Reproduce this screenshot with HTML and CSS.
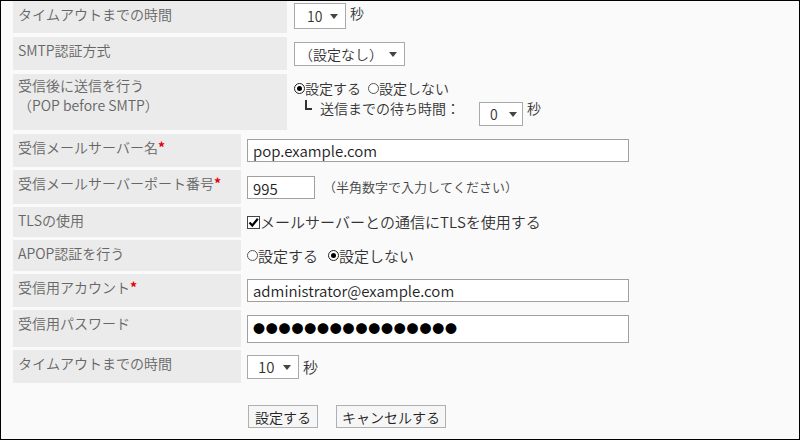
FILE: index.html
```html
<!DOCTYPE html>
<html lang="ja">
<head>
    <meta charset="utf-8">
    <link rel="stylesheet" href="styles.css">
</head>
<body>
    <div class="screen">
        <div class="form-table top-table">
            <div class="label">タイムアウトまでの時間</div>
            <div class="value value-top">
                <span class="select sel-sec"><select><option>10</option></select></span>
                <span class="unit">秒</span>
            </div>

            <div class="label">SMTP認証方式</div>
            <div class="value">
                <span class="select sel-auth"><select><option>（設定なし）</option></select></span>
            </div>

            <div class="label label-multi">受信後に送信を行う<br>（POP before SMTP）</div>
            <div class="value value-stack">
                <div class="choice-line">
                    <label class="choice"><span class="radio checked"></span>設定する</label>
                    <label class="choice"><span class="radio"></span>設定しない</label>
                </div>
                <div class="sub-line">
                    <span class="branch"></span>
                    <span class="sub-text">送信までの待ち時間：</span>
                    <span class="select sel-wait"><select><option>0</option></select></span>
                    <span class="unit sub-text">秒</span>
                </div>
            </div>
        </div>

        <div class="form-table bottom-table">
            <div class="label">受信メールサーバー名<span class="req">*</span></div>
            <div class="value">
                <input class="text wide" type="text" value="pop.example.com">
            </div>

            <div class="label">受信メールサーバーポート番号<span class="req">*</span></div>
            <div class="value">
                <input class="text port" type="text" value="995">
                <span class="hint">（半角数字で入力してください）</span>
            </div>

            <div class="label">TLSの使用</div>
            <div class="value">
                <label class="choice">
                    <span class="checkbox">
                        <svg width="11" height="11" viewBox="0 0 11 11"><path d="M1.5 5.5 L4.3 8.5 L9.8 1.8" fill="none" stroke="#000" stroke-width="2.2"/></svg>
                    </span>メールサーバーとの通信にTLSを使用する
                </label>
            </div>

            <div class="label">APOP認証を行う</div>
            <div class="value">
                <label class="choice"><span class="radio"></span>設定する</label>
                <label class="choice"><span class="radio checked"></span>設定しない</label>
            </div>

            <div class="label">受信用アカウント<span class="req">*</span></div>
            <div class="value">
                <input class="text wide" type="text" value="administrator@example.com">
            </div>

            <div class="label">受信用パスワード</div>
            <div class="value">
                <span class="text wide pass"><span class="dots">●●●●●●●●●●●●●●●●</span></span>
            </div>

            <div class="label">タイムアウトまでの時間</div>
            <div class="value">
                <span class="select sel-sec2"><select><option>10</option></select></span>
                <span class="unit">秒</span>
            </div>
        </div>

        <div class="actions">
            <button class="btn">設定する</button>
            <button class="btn">キャンセルする</button>
        </div>
    </div>
</body>
</html>
```

FILE: styles.css
```css
body {
    margin: 0;
    font-family: "Noto Sans CJK JP", sans-serif;
    font-weight: 350;
    font-kerning: none;
    background-color: #fafafa;
}

.screen {
    width: 800px;
    height: 440px;
    box-sizing: border-box;
    border: 1px solid #000;
    background-color: #fafafa;
    padding-left: 12px;
    overflow: hidden;
}

.form-table {
    display: grid;
}

.top-table {
    grid-template-columns: 274px 1fr;
    grid-template-rows: 32px 33px 56px;
    row-gap: 4px;
}

.bottom-table {
    margin-top: 4px;
    grid-template-columns: 228px 1fr;
    grid-template-rows: 33px 34px 30px 31px 33px 37px 33px;
    row-gap: 3px;
}

.label {
    background-color: #ebebeb;
    color: #666;
    font-size: 14px;
    line-height: 20px;
    padding: 3px 5px 0;
}

.label-multi {
    padding-top: 1px;
}

.req {
    color: #e60000;
    font-weight: bold;
}

.value {
    display: flex;
    align-items: center;
    font-size: 15px;
    line-height: 20px;
    color: #333;
    padding-left: 6px;
}

.top-table .value {
    font-size: 14px;
    padding-left: 7px;
}

.value-top {
    align-items: flex-start;
    padding-top: 2px;
}

.value-stack {
    flex-direction: column;
    align-items: flex-start;
    justify-content: flex-start;
    padding-top: 4px;
}

.unit {
    margin-left: 4px;
}

/* selects */
.select {
    position: relative;
    display: inline-block;
}

.select select {
    appearance: none;
    -webkit-appearance: none;
    box-sizing: border-box;
    height: 24px;
    border: 1px solid #a9a9a9;
    border-radius: 0;
    background-color: #fff;
    font-family: "Noto Sans CJK JP", sans-serif;
    font-weight: 350;
    font-size: 14px;
    color: #333;
    padding: 0 0 0 12px;
    outline: none;
}

.select::after {
    content: "";
    position: absolute;
    right: 8px;
    top: 50%;
    margin-top: -2px;
    border-left: 4px solid transparent;
    border-right: 4px solid transparent;
    border-top: 5px solid #444;
}

.sel-sec select {
    width: 52px;
    height: 26px;
}

.sel-auth select {
    width: 111px;
    padding-left: 4px;
}

.sel-wait select {
    width: 44px;
    padding-left: 10px;
}

.sel-wait::after {
    right: 6px;
}

.sel-sec2 select {
    width: 52px;
    padding-left: 10px;
    font-size: 15px;
}

/* radio / checkbox */
.choice-line {
    display: flex;
    line-height: 20px;
}

.choice {
    display: inline-flex;
    align-items: center;
}

.choice + .choice {
    margin-left: 7px;
}

.bottom-table .choice + .choice {
    margin-left: 10px;
}

.radio {
    box-sizing: border-box;
    width: 11px;
    height: 11px;
    border: 1px solid #555;
    border-radius: 50%;
    background-color: #fff;
    position: relative;
}

.radio.checked {
    border-color: #222;
}

.radio.checked::after {
    content: "";
    position: absolute;
    left: 2px;
    top: 2px;
    width: 5px;
    height: 5px;
    border-radius: 50%;
    background-color: #000;
}

.checkbox {
    box-sizing: border-box;
    width: 13px;
    height: 13px;
    border: 1px solid #444;
    background-color: #fff;
    display: inline-flex;
    align-items: center;
    justify-content: center;
}

.checkbox svg {
    display: block;
}

.sub-line {
    display: flex;
    align-items: flex-start;
    margin-top: 4px;
}

.sub-text {
    line-height: 12px;
}

.branch {
    box-sizing: border-box;
    width: 7px;
    height: 10px;
    margin: -2px 8px 0 11px;
    border-left: 2px solid #333;
    border-bottom: 2px solid #333;
}

.sub-line .select {
    margin-left: 19px;
}

/* text boxes */
.text {
    box-sizing: border-box;
    height: 23px;
    border: 1px solid #a0a0a0;
    background-color: #fff;
    font-family: "Noto Sans CJK JP", sans-serif;
    font-weight: 350;
    font-size: 15px;
    color: #222;
    padding: 0 5px;
    outline: none;
}

.wide {
    width: 382px;
}

.port {
    width: 68px;
    padding-top: 3px;
}

.hint {
    margin-left: 8px;
    font-size: 13px;
    color: #444;
}

.pass {
    height: 28px;
    display: flex;
    align-items: center;
}

.dots {
    font-size: 12px;
    letter-spacing: 0.8px;
    color: #000;
}

/* buttons */
.actions {
    display: flex;
    gap: 18px;
    margin-top: 22px;
    padding-left: 235px;
}

.btn {
    height: 23px;
    min-width: 70px;
    padding: 0 5px;
    border: 1px solid #b0b0b0;
    background-color: #f6f6f6;
    font-family: "Noto Sans CJK JP", sans-serif;
    font-weight: 350;
    font-size: 14px;
    color: #222;
    cursor: pointer;
}
```
